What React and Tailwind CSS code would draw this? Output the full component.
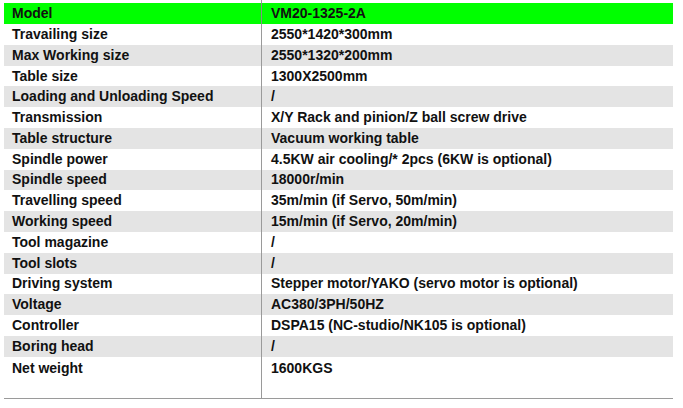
const rows = [
  ["Travailing size", "2550*1420*300mm"],
  ["Max Working size", "2550*1320*200mm"],
  ["Table size", "1300X2500mm"],
  ["Loading and Unloading Speed", "/"],
  ["Transmission", "X/Y Rack and pinion/Z ball screw drive"],
  ["Table structure", "Vacuum working table"],
  ["Spindle power", "4.5KW air cooling/* 2pcs (6KW is optional)"],
  ["Spindle speed", "18000r/min"],
  ["Travelling speed", "35m/min (if Servo, 50m/min)"],
  ["Working speed", "15m/min (if Servo, 20m/min)"],
  ["Tool magazine", "/"],
  ["Tool slots", "/"],
  ["Driving system", "Stepper motor/YAKO (servo motor is optional)"],
  ["Voltage", "AC380/3PH/50HZ"],
  ["Controller", "DSPA15 (NC-studio/NK105 is optional)"],
  ["Boring head", "/"],
];

export default function App() {
  return (
    <div className="w-[683px] h-[408px] bg-white pl-[4px] font-['Liberation_Sans',Arial,sans-serif] text-[14px] font-bold text-[#111]">
      <div className="w-[669px] border-b border-[#9a9a9a]">
        {/* top gap */}
        <div className="flex h-[3px]">
          <div className="w-[258px] border-r border-[#9a9a9a]" />
        </div>

        {/* header */}
        <div className="flex h-[21px] items-center bg-[#00ff00]">
          <div className="w-[258px] h-full flex items-center pl-[8px] border-r border-[#8a8a8a]">Model</div>
          <div className="flex-1 pl-[9px]">VM20-1325-2A</div>
        </div>

        {rows.map(([k, v], i) => (
          <div
            key={k}
            className={`flex h-[20.8px] items-center ${i % 2 === 1 ? "bg-[#e4e4e4]" : "bg-white"}`}
          >
            <div className="w-[258px] h-full flex items-center pl-[8px] border-r border-[#9a9a9a]">{k}</div>
            <div className="flex-1 pl-[9px]">{v}</div>
          </div>
        ))}

        {/* last row */}
        <div className="flex h-[41px]">
          <div className="w-[258px] h-full pl-[8px] pt-[1px] border-r border-[#9a9a9a]">Net weight</div>
          <div className="flex-1 pl-[9px] pt-[1px]">1600KGS</div>
        </div>
      </div>
    </div>
  );
}
